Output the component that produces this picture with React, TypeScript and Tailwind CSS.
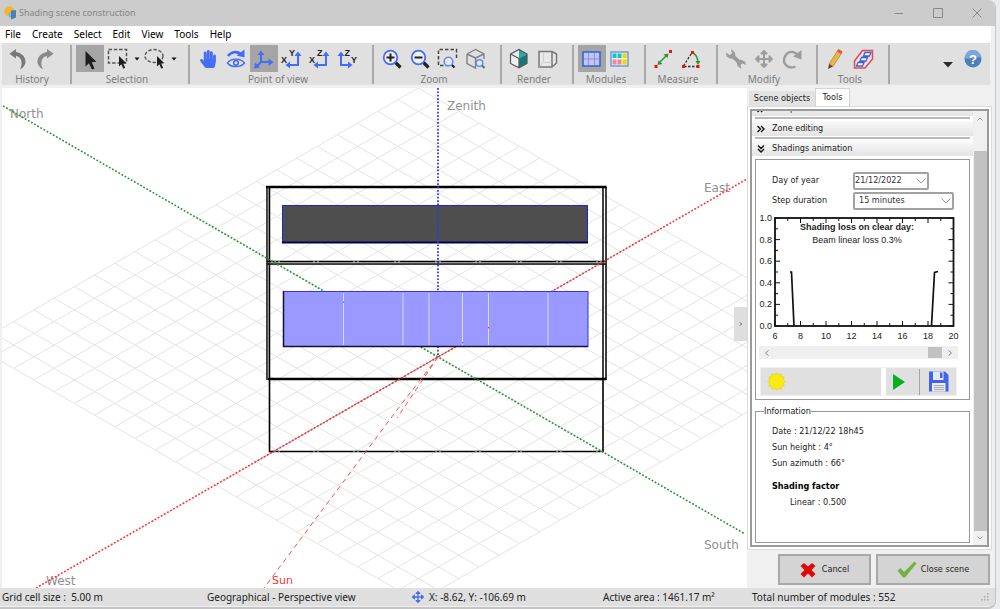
import React from 'react';
import { FaHandPaper, FaArrowsAlt } from 'react-icons/fa';

const BLUE = '#456cf5';
const GREY = '#9c9c9c';

function Glyph({ children }: { children: React.ReactNode }) {
  return (
    <svg viewBox="0 0 28 27" className="h-[27px] w-7" fill="none" aria-hidden="true">
      {children}
    </svg>
  );
}

function Pointer({ x, y, s = 1 }: { x: number; y: number; s?: number }) {
  return (
    <path
      transform={`translate(${x} ${y}) scale(${s})`}
      d="M0 0V15.5L3.4 12.2L6.4 18.6L9 17.4L6.2 11.2L10.8 10.8Z"
      fill="#1e1e1e"
    />
  );
}

const UNDO = 'M5.5 8.7L12 4V7C18.500 8 22.500 13 21.300 18.500C20.500 21 18.500 23.300 16 24.200C19.300 18.500 17.500 11.800 12 11V13.600Z';

function Tool({ label, active, children }: { label: string; active?: boolean; children: React.ReactNode }) {
  return (
    <button
      type="button"
      aria-label={label}
      className={active ? 'flex h-[27px] w-7 items-center justify-center bg-[#a5a5a5]' : 'flex h-[27px] w-7 items-center justify-center'}
    >
      {children}
    </button>
  );
}

function Group({ name, children }: { name: string; children: React.ReactNode }) {
  return (
    <div className="flex h-[39px] border-r-2 border-[#a9a9a9] pr-2.5 pl-1 first:pl-0.5">
      <div className="flex flex-col items-center">
        <div className="flex">{children}</div>
        <span className="text-[10px] leading-[15px] text-[#7d7d7d]">{name}</span>
      </div>
    </div>
  );
}

function Caret() {
  return (
    <button type="button" aria-label="More options" className="flex w-[9px] items-center justify-center">
      <svg viewBox="0 0 6 4" className="h-1 w-1.5"><path d="M0.500 0.500H5.500L3 3.500Z" fill="#111" /></svg>
    </button>
  );
}

function ViewAxes({ a, b, right }: { a: string; b: string; right?: boolean }) {
  return (
    <Glyph>
      {right ? (
        <>
          <path d="M7 9V20H15" stroke={BLUE} strokeWidth="2" />
          <path d="M3.500 11L7 6.500L10.500 11ZM14 16.500L18.500 20L14 23.500Z" fill={BLUE} />
          <text x="10.500" y="11" fontSize="9" fontWeight="700" fill="#222" fontFamily="Liberation Sans">{a}</text>
          <text x="17" y="17.500" fontSize="9" fontWeight="700" fill="#222" fontFamily="Liberation Sans">{b}</text>
        </>
      ) : (
        <>
          <path d="M20 9V20H11" stroke={BLUE} strokeWidth="2" />
          <path d="M16.500 11L20 6.500L23.500 11ZM12 16.500L7.500 20L12 23.500Z" fill={BLUE} />
          <text x="3" y="17.500" fontSize="9" fontWeight="700" fill="#222" fontFamily="Liberation Sans">{a}</text>
          <text x="11" y="11" fontSize="9" fontWeight="700" fill="#222" fontFamily="Liberation Sans">{b}</text>
        </>
      )}
    </Glyph>
  );
}

function Magnifier({ plus }: { plus?: boolean }) {
  return (
    <Glyph>
      <path d="M17.500 17.500L22.500 22.500" stroke="#222" strokeWidth="3.200" />
      <circle cx="12.500" cy="12.500" r="6.800" stroke={BLUE} strokeWidth="1.800" fill="#eef0fa" />
      <path d={plus ? 'M8.500 12.500H16.500M12.500 8.500V16.500' : 'M8.500 12.500H16.500'} stroke="#222" strokeWidth="2" />
    </Glyph>
  );
}

function Toolbar() {
  return (
    <div className="mr-[5px] flex h-[42px] shrink-0 bg-[#e0e0e0] pt-0.5">
      <Group name="History">
        <Tool label="Undo"><Glyph><path d={UNDO} fill="#787878" /></Glyph></Tool>
        <Tool label="Redo"><Glyph><path d={UNDO} fill="#8a8a8a" transform="translate(27 0) scale(-1 1)" /></Glyph></Tool>
      </Group>
      <Group name="Selection">
        <Tool label="Select" active><Glyph><Pointer x={9.5} y={6} /></Glyph></Tool>
        <Tool label="Rectangle selection">
          <Glyph><rect x="4.500" y="4.500" width="18" height="13.500" stroke="#555" strokeWidth="1.500" strokeDasharray="3.500 1.800" /><Pointer x={15} y={11} s={0.68} /></Glyph>
        </Tool>
        <Caret />
        <Tool label="Lasso selection">
          <Glyph><ellipse cx="13" cy="11" rx="9" ry="6.500" stroke="#555" strokeWidth="1.400" strokeDasharray="3.300 1.800" /><Pointer x={16} y={11} s={0.68} /></Glyph>
        </Tool>
        <Caret />
      </Group>
      <Group name="Point of view">
        <Tool label="Pan"><FaHandPaper size={18} color={BLUE} /></Tool>
        <Tool label="Orbit">
          <Glyph>
            <path d="M6 11C9 6.500 15 6 19 9" stroke={BLUE} strokeWidth="2.600" />
            <path d="M22.500 4.500V12.500L14.500 10.500Z" fill={BLUE} />
            <path d="M5.500 18C9 12.800 18.500 12.800 22.500 18C18.500 22.800 9 22.800 5.500 18Z" stroke={BLUE} strokeWidth="1.400" />
            <circle cx="14" cy="17.800" r="2.300" stroke={BLUE} strokeWidth="1.600" />
          </Glyph>
        </Tool>
        <Tool label="Perspective view" active>
          <Glyph>
            <path d="M11 9V17H20M11 17L7 21" stroke={BLUE} strokeWidth="2" />
            <path d="M7.500 10L11 5.500L14.500 10ZM18.500 13.500L23.500 17.300L18.500 21ZM4 23.500L5 17.500L10 22.500Z" fill={BLUE} />
          </Glyph>
        </Tool>
        <Tool label="Top view"><ViewAxes a="X" b="Y" /></Tool>
        <Tool label="Front view"><ViewAxes a="X" b="Z" /></Tool>
        <Tool label="Side view"><ViewAxes a="Z" b="Y" right /></Tool>
      </Group>
      <Group name="Zoom">
        <Tool label="Zoom in"><Magnifier plus /></Tool>
        <Tool label="Zoom out"><Magnifier /></Tool>
        <Tool label="Zoom to area">
          <Glyph>
            <path d="M15 20.500H4.500V4.500H22.500V13" stroke="#444" strokeWidth="1.500" strokeDasharray="3.500 2" />
            <circle cx="14.500" cy="16.500" r="4.300" stroke="#6a89f0" strokeWidth="1.600" fill="#e6eafa" />
            <path d="M18 20L20.500 22.500" stroke="#222" strokeWidth="2.200" />
          </Glyph>
        </Tool>
        <Tool label="Zoom to scene">
          <Glyph>
            <path d="M5 9L13.500 4.500L22 9V14M5 9V18.500L13.500 23V13L5 9M13.500 13L22 9" stroke="#808080" strokeWidth="1.400" />
            <circle cx="17.500" cy="18" r="3.300" stroke="#6a89f0" strokeWidth="1.500" fill="#e6eafa" />
            <path d="M20 20.500L22.500 23" stroke="#666" strokeWidth="1.800" />
          </Glyph>
        </Tool>
      </Group>
      <Group name="Render">
        <Tool label="Solid view">
          <Glyph>
            <path d="M4.500 9L13 4.500V13.500Z" fill="#dcefee" />
            <path d="M13 4.500L21 9L13 13.500Z" fill="#35a3a2" />
            <path d="M4.500 9L13 13.500V22.500L4.500 18.500Z" fill="#efefef" />
            <path d="M21 9L13 13.500V22.500L21 18.500Z" fill="#14797b" />
            <path d="M4.500 9L13 4.500L21 9V18.500L13 22.800L4.500 18.500ZM4.500 9L13 13.500M13 13.500V22.800" stroke="#555" strokeWidth="1.200" />
          </Glyph>
        </Tool>
        <Tool label="Wireframe view">
          <Glyph>
            <path d="M5 6.500H18L22.500 9V18L18 22H5Z" stroke="#777" strokeWidth="1.500" fill="#e8e8e8" />
            <path d="M18 6.500V22" stroke="#777" strokeWidth="1.500" />
            <path d="M9.500 7V17.500H17.500M9.500 17.500L5.500 21.500" stroke="#cfcfcf" />
          </Glyph>
        </Tool>
      </Group>
      <Group name="Modules">
        <Tool label="Module grid" active>
          <Glyph>
            <rect x="5" y="7" width="17" height="14" fill="#c5c3fb" stroke="#2c63cf" strokeWidth="1.500" />
            <path d="M10.500 8V20M16.500 8V20M6 14H21" stroke="#8a96d8" />
          </Glyph>
        </Tool>
        <Tool label="Module strings">
          <Glyph>
            <rect x="5" y="7" width="17" height="14" fill="#f3efd8" stroke="#5c8fe6" strokeWidth="1.300" />
            <path d="M6.500 8.500H10.500V13H6.500ZM11.500 8.500H15.500V13H11.500Z" fill="#14c3d4" />
            <path d="M6.500 14.500H10.500V19.500H6.500ZM11.500 14.500H15.500V19.500H11.500Z" fill="#f2849c" />
            <path d="M16.500 8.500H20.800V13H16.500ZM16.500 14.500H20.800V19.500H16.500Z" fill="#eadb0b" />
          </Glyph>
        </Tool>
      </Group>
      <Group name="Measure">
        <Tool label="Measure distance">
          <Glyph>
            <path d="M9 18L17 10" stroke="#36963c" strokeWidth="1.600" />
            <path d="M7.500 20L8.500 15.500L12.500 19ZM18.500 8.500L17.500 13L13.500 9.500Z" fill="#2f9136" />
            <rect x="4.500" y="20" width="3" height="3" fill="#ee1111" /><rect x="19" y="5" width="3" height="3" fill="#ee1111" />
          </Glyph>
        </Tool>
        <Tool label="Measure angle">
          <Glyph>
            <path d="M5.500 21L14 7.500M6 21.500H20" stroke="#333" strokeWidth="1.300" strokeDasharray="2.500 1.500" />
            <path d="M15 8C18.500 10 20 14 20 18" stroke="#36963c" strokeWidth="1.500" />
            <path d="M17.500 16H22.500L20 20Z" fill="#2f9136" />
            <path d="M4 20H7V23H4ZM18.500 20H21.500V23H18.500ZM13 6H16V9H13Z" fill="#ee1111" />
          </Glyph>
        </Tool>
      </Group>
      <Group name="Modify">
        <Tool label="Properties">
          <Glyph>
            <path d="M10.500 11L17.500 17.500" stroke={GREY} strokeWidth="3.800" />
            <path d="M9 4L13 7.500L13.500 12L9 14L4.500 11.500L4 7.500L7.500 10L10 8.500ZM19.500 24L15.500 21L14.500 17L18.500 14.500L23 16.500L24 20L20.500 18.500L18.500 20Z" fill={GREY} />
          </Glyph>
        </Tool>
        <Tool label="Move"><FaArrowsAlt size={18} color={GREY} /></Tool>
        <Tool label="Rotate">
          <Glyph>
            <path d="M17.500 21.500C9 25 4.500 17.500 6.500 12.500C8.500 7 15 4.500 20 10" stroke={GREY} strokeWidth="2.400" />
            <path d="M23.500 5V14.500L15 11.500Z" fill={GREY} />
          </Glyph>
        </Tool>
      </Group>
      <Group name="Tools">
        <Tool label="Draw">
          <Glyph>
            <path d="M16 5L20 7.500L11 21.500L7 19Z" fill="#eab646" stroke="#bd8830" strokeWidth="0.800" />
            <path d="M15 6.500L16.500 4L20.500 6.500L19 9Z" fill="#d85b44" />
            <path d="M7 19L6 24L11 21.500Z" fill="#5b4632" />
          </Glyph>
        </Tool>
        <Tool label="Layers">
          <Glyph>
            <path d="M4.500 16L12.500 5.500H22.500V14L15 23H4.500Z" stroke="#e24b4b" strokeWidth="1.500" fill="#f2dede" />
            <path d="M15 7.500H21L19.500 11H13.500ZM11.500 12.500H17.500L16 16H10ZM8 17.500H14L12.500 21H6.500Z" stroke="#3a63e0" strokeWidth="1.300" fill="#fff" />
          </Glyph>
        </Tool>
      </Group>
      <div className="ml-auto flex items-center gap-[11px] pr-2 pb-3">
        <button type="button" aria-label="Customise toolbar" className="pt-3">
          <svg viewBox="0 0 10 6" className="h-1.5 w-2.5"><path d="M0 0H10L5 5.500Z" fill="#2b2b2b" /></svg>
        </button>
        <button type="button" aria-label="Help">
          <svg viewBox="0 0 18 18" className="size-[18px]">
            <circle cx="9" cy="9" r="8.500" fill="#4a80bd" />
            <path d="M1 8A8 8 0 0 1 17 7.500C12 6 6 10.500 1 8Z" fill="#7ba6d6" />
            <text x="9" y="13.500" textAnchor="middle" fontSize="13" fontWeight="700" fill="#fff" fontFamily="Liberation Sans">?</text>
          </svg>
        </button>
      </div>
    </div>
  );
}

const CELL_X = 20.23;
const CELL_Y = 11.68;
const CELLS = 22;
const gridPoint = (i: number, j: number) => `${418.3 + (i - j) * CELL_X} ${88 + (i + j) * CELL_Y}`;
const gridPath = Array.from({ length: CELLS + 1 }, (_, k) =>
  `M${gridPoint(k, 0)}L${gridPoint(k, CELLS)}M${gridPoint(0, k)}L${gridPoint(CELLS, k)}`,
).join('');
const gaps = [277, 316, 356, 397, 438, 478, 519, 559, 599];

function Scene() {
  return (
    <svg viewBox="2 88 745 500" preserveAspectRatio="xMidYMid slice" className="h-full w-full" role="img" aria-label="3D scene">
      <path d={gridPath} stroke="#e4e4e4" fill="none" />
      <g fontFamily="DejaVu Sans" fontSize="12" fill="#909090">
        <text x="10" y="118">North</text>
        <text x="447" y="110">Zenith</text>
        <text x="704" y="192">East</text>
        <text x="704" y="549">South</text>
        <text x="46" y="585">West</text>
        <text x="272" y="584" fontSize="11" fill="#ff3333">Sun</text>
      </g>
      <g fill="none" stroke="#000">
        <path d="M267 187V380M269.500 187V380" strokeWidth="1.500" />
        <path d="M268.200 188V379" stroke="#777" />
        <path d="M266 187H606.500" strokeWidth="2.500" />
        <path d="M603 187V380M606 187V380" strokeWidth="1.500" />
        <path d="M267 261.500H606M267 264H606" strokeWidth="1.700" />
        <path d="M268 262.800H606" stroke="#777" strokeWidth="0.800" />
        <path d="M268 379H606" strokeWidth="2.600" />
        <path d="M269.500 380V451.500H603V380" strokeWidth="1.600" />
        <path d={gaps.map((x) => `M${x - 3} 262H${x - 1}M${x + 1} 262H${x + 3}M${x - 3} 452H${x - 1}M${x + 1} 452H${x + 3}`).join('')} stroke="#ddd" />
      </g>
      <rect x="282.500" y="205.500" width="305" height="37" fill="#4e4e4e" stroke="#2222d8" />
      <path d="M282 242.500H588" stroke="#000050" strokeWidth="1.800" />
      <path d="M438 88V357" stroke="#3333ff" strokeWidth="1.800" strokeDasharray="1.700 1.700" />
      <path d="M3 106L438 357L745 534" stroke="#2a9430" strokeWidth="1.600" strokeDasharray="1.800 1.800" />
      <path d="M36 588L438 357L747 179" stroke="#ff3030" strokeWidth="1.600" strokeDasharray="1.800 1.800" />
      <path d="M438 357L400 406L264 588" stroke="#ff5050" strokeDasharray="5 4" fill="none" />
      <path d="M438 357L397 418" stroke="#ff5050" strokeDasharray="5 4" />
      <rect x="283.500" y="291.500" width="304.500" height="55" fill="#9999ff" stroke="#3333e8" />
      <path d="M283.500 291V346.500H588" stroke="#10103a" strokeWidth="1.500" fill="none" />
      <path d="M343.500 293V345M403 293V345M429 293V345M462.500 293V345M488.500 293V345M548 293V345" stroke="#d8d8ff" />
      <path d="M343 301.500H344.200V302.700H343Z" fill="#337788" />
      <path d="M488 327H489.200V328.200H488ZM462 342H463.200V343.200H462Z" fill="#e03060" />
    </svg>
  );
}

const px = (hour: number) => 775 + (hour - 6) * 12.75;
const py = (v: number) => 326 - v * 108;

function LossChart() {
  const hours = Array.from({ length: 15 }, (_, k) => k + 6);
  const levels = Array.from({ length: 11 }, (_, k) => k / 10);
  const ticks =
    hours.map((h) => { const n = h % 2 ? 3 : 5; return `M${px(h)} 218V${218 + n}M${px(h)} 326V${326 - n}`; }).join('') +
    levels.map((v, k) => { const n = k % 2 ? 3 : 5; return `M775 ${py(v)}H${775 + n}M953.500 ${py(v)}H${953.5 - n}`; }).join('');
  return (
    <svg viewBox="758 213 201 130" className="ml-0.5 mt-[3px] h-[130px] w-[201px]" role="img" aria-label="Shading loss on clear day">
      <path d={ticks} stroke="#111" />
      <rect x="775" y="218" width="178.500" height="108" fill="none" stroke="#111" strokeWidth="1.800" />
      <path d="M790 272H791.500L794 326M931.500 326L934.500 272.500L938 271.500" fill="none" stroke="#111" strokeWidth="1.700" />
      <g fontFamily="Liberation Sans" fontSize="9" fill="#222">
        <text x="857" y="230" textAnchor="middle" fontWeight="700">Shading loss on clear day:</text>
        <text x="857" y="243" textAnchor="middle">Beam linear loss 0.3%</text>
        {[0, 0.2, 0.4, 0.6, 0.8, 1].map((v) => (
          <text key={v} x="772" y={py(v) + 3} textAnchor="end">{v.toFixed(1)}</text>
        ))}
        {[6, 8, 10, 12, 14, 16, 18, 20].map((h) => (
          <text key={h} x={px(h)} y="339" textAnchor="middle">{h}</text>
        ))}
      </g>
    </svg>
  );
}

function Section({ title, open }: { title: string; open?: boolean }) {
  return (
    <button type="button" className="flex h-[15px] shrink-0 items-center gap-[7px] bg-linear-to-b from-[#fafafa] to-[#e3e3e3] pl-[5px]">
      <svg viewBox="0 0 8 8" className={open ? 'size-2 rotate-90' : 'size-2'} fill="none" stroke="#111" strokeWidth="1.400">
        <path d="M0.500 1L3.500 4L0.500 7M4 1L7 4L4 7" />
      </svg>
      {title}
    </button>
  );
}

function Divider() {
  return <div className="mx-[3px] mt-px mb-0.5 h-0.5 shrink-0 bg-[#b9b9b9]" />;
}

function Dropdown({ id, value, width }: { id: string; value: string; width: string }) {
  return (
    <div className="relative">
      <select id={id} defaultValue={value} className={`${width} h-[18px] appearance-none rounded-[2px] border-2 border-[#a2a2a2] bg-white text-[#333]`}>
        <option>{value}</option>
      </select>
      <svg viewBox="0 0 10 6" className="pointer-events-none absolute top-1.5 right-[3px] h-1.5 w-2.5" fill="none" stroke="#999">
        <path d="M0.500 0.500L5 5L9.500 0.500" />
      </svg>
    </div>
  );
}

function SidePanel() {
  return (
    <aside className="flex w-[248px] shrink-0 flex-col bg-[#f0f0f0] font-['DejaVu_Sans_Condensed','DejaVu_Sans',sans-serif] text-[9px] text-[#222]">
      <div role="tablist" className="flex h-[18px] items-end pl-0.5">
        <button type="button" role="tab" aria-selected="false" className="h-[15px] w-[66px] bg-[#e2e2e2]">Scene objects</button>
        <button type="button" role="tab" aria-selected="true" className="h-[18px] w-[35px] border border-b-0 border-[#d4d4d4] bg-white">Tools</button>
      </div>
      <div className="mr-[3px] flex min-h-0 flex-1 flex-col border border-[#dadada] bg-white p-0.5">
        <div className="flex min-h-0 flex-1 border-2 border-[#9a9a9a]">
          <div className="flex min-w-0 flex-1 flex-col overflow-hidden">
            <div className="-mt-2.5 flex flex-col"><Section title="Sun position" /></div>
            <Divider />
            <Section title="Zone editing" />
            <Divider />
            <Section title="Shadings animation" open />
            <div className="mx-[3px] mt-[3px] flex shrink-0 flex-col border border-[#999] pt-3 pb-[3px]">
              <div className="flex flex-col gap-0.5 pl-4">
                <div className="flex items-center">
                  <label htmlFor="day" className="w-[81px]">Day of year</label>
                  <Dropdown id="day" value="21/12/2022" width="w-[76px]" />
                </div>
                <div className="flex items-center">
                  <label htmlFor="step" className="w-[81px]">Step duration</label>
                  <Dropdown id="step" value="15 minutes" width="w-[101px] pl-1" />
                </div>
              </div>
              <LossChart />
              <div className="mt-[3px] mr-[11px] ml-[3px] flex h-[13px] items-center justify-between bg-[#efefef] px-1.5">
                <button type="button" aria-label="Earlier"><svg viewBox="0 0 4 6" className="h-1.5 w-1" fill="none" stroke="#888"><path d="M3.500 0.500L0.500 3L3.500 5.500" /></svg></button>
                <div className="mr-1.5 ml-auto h-[11px] w-[14px] bg-[#c1c1c1]" />
                <button type="button" aria-label="Later"><svg viewBox="0 0 4 6" className="h-1.5 w-1" fill="none" stroke="#888"><path d="M0.500 0.500L3.500 3L0.500 5.500" /></svg></button>
              </div>
              <div className="mt-2 mr-3 ml-1 flex h-[29px] gap-[5px] border border-[#f0f0f0]">
                <div className="flex flex-1 items-center bg-[#e0e0e0] pl-1.5">
                  <svg viewBox="-10 -10 20 20" className="size-[19px]" aria-label="Sun">
                    <path
                      fill="#f8ea13"
                      stroke="#f2c40f"
                      strokeWidth="0.600"
                      d="M0 -9.500L1.700 -7.200L4.750 -8.200L5.100 -5.100L8.200 -4.750L7.200 -1.700L9.500 0L7.200 1.700L8.200 4.750L5.100 5.100L4.750 8.200L1.700 7.200L0 9.500L-1.700 7.200L-4.750 8.200L-5.100 5.100L-8.200 4.750L-7.200 1.700L-9.500 0L-7.200 -1.700L-8.200 -4.750L-5.100 -5.100L-4.750 -8.200L-1.700 -7.200Z"
                    />
                  </svg>
                </div>
                <div className="flex w-[70px] items-center bg-[#e0e0e0]">
                  <button type="button" aria-label="Play" className="flex h-[26px] w-[34px] items-center justify-center border-r border-[#a5a5a5] pr-2">
                    <svg viewBox="0 0 12 16" className="h-4 w-3"><path d="M0 0L12 8L0 16Z" fill="#09ae1d" /></svg>
                  </button>
                  <button type="button" aria-label="Save" className="pl-2">
                    <svg viewBox="0 0 21 21" className="size-[21px]">
                      <path d="M1 0.500H17L20.500 4V20.500H1Z" fill="#4164e8" />
                      <path d="M5 0.500H15.500V9H5Z" fill="#e6e9f5" /><path d="M12 1.500H14.500V7H12Z" fill="#4164e8" />
                      <path d="M4 12H17.500V20.500H4Z" fill="#ececec" /><path d="M6 14.500H16M6 16.500H16M6 18.500H16" stroke="#aaa" />
                    </svg>
                  </button>
                </div>
              </div>
            </div>
            <fieldset className="mx-[3px] mt-[5px] mb-0.5 flex-1 border border-[#999] pl-4">
              <legend className="-ml-2 px-0 leading-3">Information</legend>
              <p className="mt-1.5 leading-4">Date : 21/12/22 18h45</p>
              <p className="leading-4">Sun height : 4°</p>
              <p className="leading-4">Sun azimuth : 66°</p>
              <p className="mt-[7px] leading-4 font-bold text-black">Shading factor</p>
              <p className="pl-[18px] leading-4">Linear : 0.500</p>
            </fieldset>
          </div>
          <div className="flex w-[14px] flex-col items-center bg-[#f0f0f0]">
            <button type="button" aria-label="Scroll up" className="flex h-10 items-start pt-1.5"><svg viewBox="0 0 6 4" className="h-1 w-1.5" fill="none" stroke="#999"><path d="M0.500 3.500L3 1L5.500 3.500" /></svg></button>
            <div className="w-[13px] flex-1 bg-[#c2c2c2]" />
            <button type="button" aria-label="Scroll down" className="flex h-[14px] items-center"><svg viewBox="0 0 6 4" className="h-1 w-1.5" fill="none" stroke="#999"><path d="M0.500 0.500L3 3L5.500 0.500" /></svg></button>
          </div>
        </div>
      </div>
      <div className="flex justify-end gap-[5px] pt-1 pb-[3px] pr-[5px]">
        <button type="button" className="flex h-[31px] w-[93px] items-center justify-center gap-1.5 border-2 border-[#a8a8a8] bg-[#d4d4d4]">
          <svg viewBox="0 0 16 16" className="size-4"><path d="M4 1L8 4.500L12 1L15.500 4L11.500 8L15.500 12L12 15.500L8 11.500L4 15.500L0.500 12L4.500 8L0.500 4Z" fill="#dd0b0b" /></svg>
          Cancel
        </button>
        <button type="button" className="flex h-[31px] w-[114px] items-center justify-center gap-1 border-2 border-[#a8a8a8] bg-[#d4d4d4]">
          <svg viewBox="0 0 20 17" className="h-[17px] w-5"><path d="M0.500 9.500L3.500 7L7 11L17.500 0.500L19.500 2.500L8 16.500H6Z" fill="#76b043" /></svg>
          Close scene
        </button>
      </div>
    </aside>
  );
}

export default function App() {
  return (
    <div className="flex h-screen overflow-hidden bg-[#e9ebee] font-['Noto_Sans',sans-serif] text-[10px] text-[#222]">
      <div className="flex min-w-0 flex-1 flex-col overflow-hidden rounded-r-lg border-r border-b-2 border-[#c4c4c4] bg-[#f0f0f0]">
        <header className="flex h-[26px] shrink-0 items-center bg-[#cccccc] pl-1">
          <svg viewBox="0 0 13 14" className="mr-0.5 h-[14px] w-[13px]" aria-hidden="true">
            <circle cx="5.500" cy="5.500" r="5" fill="#f8b71d" />
            <path d="M4.500 7L8 5.500V12.500L4.500 11Z" fill="#83b6dc" /><path d="M7 4.500L12 4V11.500L7 13.500Z" fill="#4583b5" />
          </svg>
          <h1 className="text-[9px] text-[#858585]">Shading scene construction</h1>
          <div className="ml-auto flex items-center gap-[29px] pr-[13px] text-[#888]">
            <button type="button" aria-label="Minimise"><svg viewBox="0 0 10 10" className="size-2.5" stroke="currentColor"><path d="M0.500 5.500H9" /></svg></button>
            <button type="button" aria-label="Maximise"><svg viewBox="0 0 10 10" className="size-2.5" stroke="currentColor" fill="none"><path d="M0.500 0.500H9.500V9.500H0.500Z" /></svg></button>
            <button type="button" aria-label="Close"><svg viewBox="0 0 10 10" className="size-2.5" stroke="currentColor"><path d="M0.500 0.500L9.500 9.500M9.500 0.500L0.500 9.500" /></svg></button>
          </div>
        </header>
        <nav className="mr-1 flex h-[17px] shrink-0 items-center gap-[11px] bg-white pl-[5px] text-black">
          {['File', 'Create', 'Select', 'Edit', 'View', 'Tools', 'Help'].map((m) => (
            <button key={m} type="button">{m}</button>
          ))}
        </nav>
        <div className="flex shrink-0 flex-col pl-0.5"><Toolbar /></div>
        <div className="flex min-h-0 flex-1 pt-[3px] pl-0.5">
          <main className="relative min-w-0 flex-1 overflow-hidden bg-white">
            <Scene />
            <button type="button" aria-label="Collapse panel" className="absolute right-0 bottom-[247px] flex h-[34px] w-[13px] items-center justify-center bg-[#dedede]">
              <svg viewBox="0 0 4 4" className="size-1" fill="none" stroke="#888"><path d="M0.500 0.500L3 2L0.500 3.500" /></svg>
            </button>
          </main>
          <SidePanel />
        </div>
        <footer className="flex h-[18px] shrink-0 items-center bg-[#dfdfdf] text-[10px]">
          <span className="w-[207px] pl-0.5 whitespace-pre">Grid cell size :  5.00 m</span>
          <span className="w-[205px]">Geographical - Perspective view</span>
          <span className="flex w-[191px] items-center gap-[5px]"><FaArrowsAlt size={12} color={BLUE} />X: -8.62, Y: -106.69 m</span>
          <span className="w-[149px]">Active area : 1461.17 m²</span>
          <span>Total number of modules : 552</span>
          <svg viewBox="0 0 8 8" className="mr-1.5 ml-auto size-2" fill="#aaa"><path d="M6 0H7.500V1.500H6ZM3 3H4.500V4.500H3ZM6 3H7.500V4.500H6ZM0 6H1.500V7.500H0ZM3 6H4.500V7.500H3ZM6 6H7.500V7.500H6Z" /></svg>
        </footer>
        <div className="h-px shrink-0" />
      </div>
      <div className="w-1 shrink-0" />
    </div>
  );
}
